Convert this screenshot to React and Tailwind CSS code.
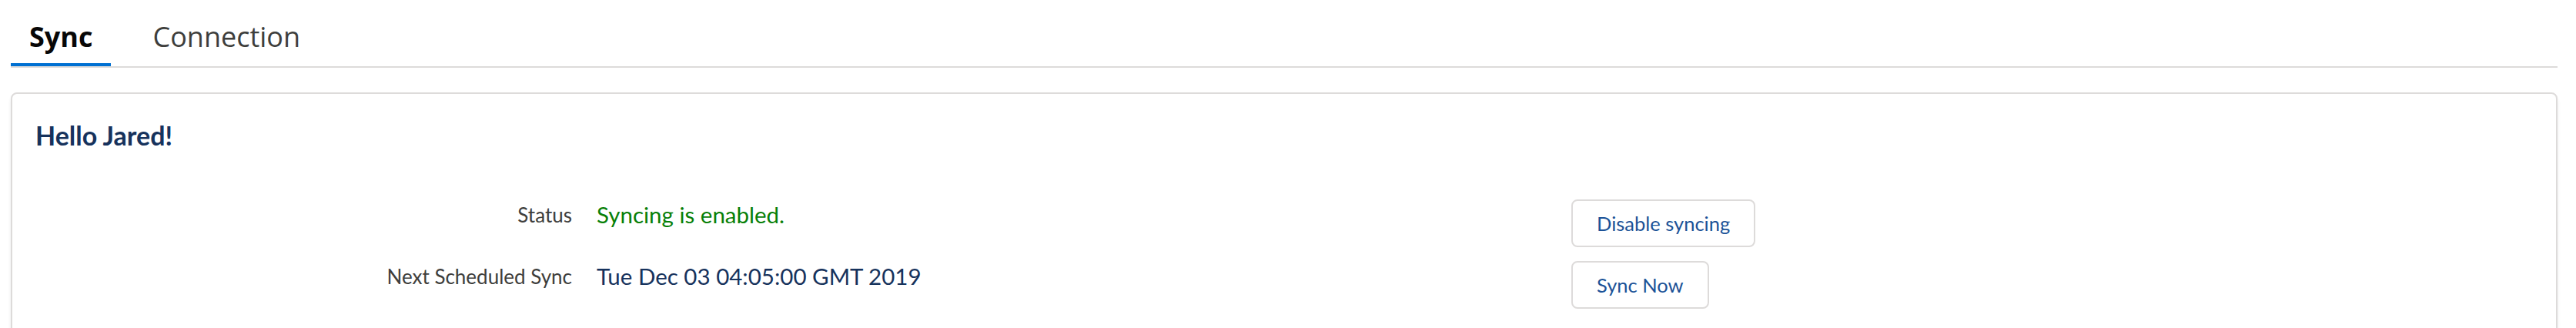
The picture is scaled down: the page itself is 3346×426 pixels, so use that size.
import { useState } from "react";

const rows = [
  { label: "Status", value: "Syncing is enabled.", tone: "text-[#078007]", action: "Disable syncing" },
  { label: "Next Scheduled Sync", value: "Tue Dec 03 04:05:00 GMT 2019", tone: "text-[#16325c]", action: "Sync Now" },
];

export default function App() {
  const [tab, setTab] = useState("sync");

  return (
    <div className="h-[426px] overflow-hidden bg-white pl-[14px] pr-[24px] font-['Lato',sans-serif]">
      <div className="flex gap-[30px] border-b-2 border-[#dddbda] font-['Open_Sans',sans-serif] text-[36px]">
        <button
          type="button"
          onClick={() => setTab("sync")}
          className={`px-6 pt-[24px] pb-[10px] leading-[48px] border-b-4 ${tab === "sync" ? "border-[#0070d2] font-bold text-[#080707]" : "border-transparent text-[#3e3e3c]"}`}
        >
          Sync
        </button>
        <button
          type="button"
          onClick={() => setTab("connection")}
          className={`px-6 pt-[24px] pb-[10px] leading-[48px] border-b-4 ${tab === "connection" ? "border-[#0070d2] font-bold text-[#080707]" : "border-transparent text-[#3e3e3c]"}`}
        >
          Connection
        </button>
      </div>

      <div className="mt-[32px] h-[360px] rounded-[8px] border-2 border-[#dddbda] bg-white px-[30px] pt-[34px] shadow-[0_4px_4px_rgba(0,0,0,0.08)]">
        <h2 className="text-[34px] font-bold leading-[40px] text-[#16325c]">Hello Jared!</h2>

        <div className="mt-[63px] flex flex-col gap-[18px]">
          {rows.map((r) => (
            <div key={r.label} className="flex items-start">
              <div className="w-[697px] text-right text-[26px] leading-[40px] text-[#3e3e3c]">{r.label}</div>
              <div className={`ml-[32px] w-[1266px] text-[29.5px] leading-[40px] ${r.tone}`}>{r.value}</div>
              <button
                type="button"
                className="h-[62px] rounded-[8px] border-2 border-[#dddbda] bg-white px-[31px] text-[25.5px] text-[#1b5297] hover:bg-[#f4f6f9]"
              >
                {r.action}
              </button>
            </div>
          ))}
        </div>
      </div>
    </div>
  );
}
